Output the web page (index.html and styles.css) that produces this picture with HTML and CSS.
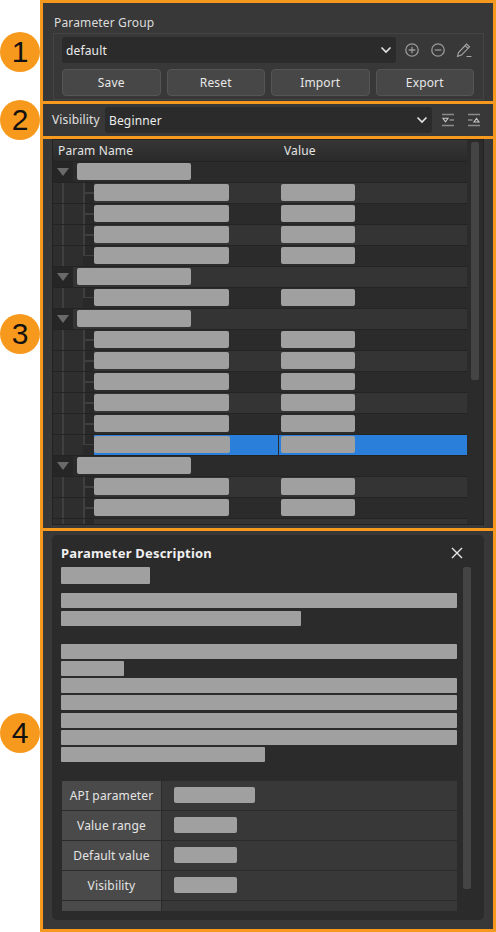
FILE: index.html
```html
<!DOCTYPE html>
<html lang="en">
<head>
<meta charset="utf-8">
<title>Parameter panel</title>
<link rel="stylesheet" href="styles.css">
</head>
<body>
<main class="frame">
  <section class="sec sec-group">
    <div class="badge">1</div>
    <div class="group-label">Parameter Group</div>
    <div class="group-box">
      <div class="combo-row">
        <div class="combo combo-group"><span>default</span>
          <svg class="chev" width="12" height="8" viewBox="0 0 12 8"><path d="M1.5 1.5 6 6l4.500-4.500" fill="none" stroke="#e4e4e4" stroke-width="1.600"/></svg>
        </div>
        <svg class="ico first" width="16" height="16" viewBox="0 0 16 16"><g fill="none" stroke="#9a9a9a" stroke-width="1.300"><circle cx="8" cy="8" r="6.200"/><path d="M4.700 8h6.600M8 4.700v6.600"/></g></svg>
        <svg class="ico" width="16" height="16" viewBox="0 0 16 16"><g fill="none" stroke="#9a9a9a" stroke-width="1.300"><circle cx="8" cy="8" r="6.200"/><path d="M4.700 8h6.600"/></g></svg>
        <svg class="ico" width="16" height="16" viewBox="0 0 16 16"><g fill="none" stroke="#a8a8a8" stroke-width="1.100"><path d="M1.500 14.500 2.500 10.500 10.500 2l3 2.800-8 8.300z"/><path d="M9 3.600l3 2.800M10.500 14.500h5"/></g></svg>
      </div>
      <div class="btn-row">
        <button class="btn">Save</button>
        <button class="btn">Reset</button>
        <button class="btn">Import</button>
        <button class="btn">Export</button>
      </div>
    </div>
  </section>

  <section class="sec sec-vis">
    <div class="badge">2</div>
    <span class="vis-label">Visibility</span>
    <div class="combo combo-vis"><span>Beginner</span>
      <svg class="chev" width="12" height="8" viewBox="0 0 12 8"><path d="M1.500 1.500 6 6l4.500-4.500" fill="none" stroke="#e4e4e4" stroke-width="1.600"/></svg>
    </div>
    <svg class="ico first-vis" width="14" height="14" viewBox="0 0 14 14"><g fill="none" stroke="#8a8a8a" stroke-width="1.600"><path d="M1 1.500h12M8.500 7H13M1 12.500h12"/></g><path d="M2 5.300h5L4.500 8.800z" fill="none" stroke="#c8c8c8" stroke-width="1.100"/></svg>
    <svg class="ico" width="14" height="14" viewBox="0 0 14 14"><g fill="none" stroke="#8a8a8a" stroke-width="1.600"><path d="M1 1.500h12M1 7h4.500M1 12.500h12"/></g><path d="M7 9h5L9.500 5.500z" fill="none" stroke="#c8c8c8" stroke-width="1.100"/></svg>
  </section>

  <section class="sec sec-table">
    <div class="badge">3</div>
    <div class="table">
      <div class="table-main">
        <div class="thead"><div class="th-name">Param Name</div><div class="th-val">Value</div></div>
        <div class="row dark group"><div class="c-name"><span class="arrow"></span><span class="m m-group"></span></div><div class="c-val"></div></div>
        <div class="row light"><div class="c-name"><span class="guide"></span><span class="m m-name"></span></div><div class="c-val"><span class="m m-val"></span></div></div>
        <div class="row dark"><div class="c-name"><span class="guide"></span><span class="m m-name"></span></div><div class="c-val"><span class="m m-val"></span></div></div>
        <div class="row light"><div class="c-name"><span class="guide"></span><span class="m m-name"></span></div><div class="c-val"><span class="m m-val"></span></div></div>
        <div class="row dark"><div class="c-name"><span class="guide last"></span><span class="m m-name"></span></div><div class="c-val"><span class="m m-val"></span></div></div>
        <div class="row light group"><div class="c-name"><span class="arrow"></span><span class="m m-group"></span></div><div class="c-val"></div></div>
        <div class="row dark"><div class="c-name"><span class="guide last"></span><span class="m m-name"></span></div><div class="c-val"><span class="m m-val"></span></div></div>
        <div class="row light group"><div class="c-name"><span class="arrow"></span><span class="m m-group"></span></div><div class="c-val"></div></div>
        <div class="row dark"><div class="c-name"><span class="guide"></span><span class="m m-name"></span></div><div class="c-val"><span class="m m-val"></span></div></div>
        <div class="row light"><div class="c-name"><span class="guide"></span><span class="m m-name"></span></div><div class="c-val"><span class="m m-val"></span></div></div>
        <div class="row dark"><div class="c-name"><span class="guide"></span><span class="m m-name"></span></div><div class="c-val"><span class="m m-val"></span></div></div>
        <div class="row light"><div class="c-name"><span class="guide"></span><span class="m m-name"></span></div><div class="c-val"><span class="m m-val"></span></div></div>
        <div class="row dark"><div class="c-name"><span class="guide"></span><span class="m m-name"></span></div><div class="c-val"><span class="m m-val"></span></div></div>
        <div class="row selected"><div class="c-name"><span class="guide last"></span><span class="sel-fill"><span class="m m-name"></span></span></div><div class="c-val"><span class="m m-val"></span></div></div>
        <div class="row dark group"><div class="c-name"><span class="arrow"></span><span class="m m-group"></span></div><div class="c-val"></div></div>
        <div class="row light"><div class="c-name"><span class="guide"></span><span class="m m-name"></span></div><div class="c-val"><span class="m m-val"></span></div></div>
        <div class="row dark"><div class="c-name"><span class="guide"></span><span class="m m-name"></span></div><div class="c-val"><span class="m m-val"></span></div></div>
        <div class="row light"><div class="c-name"><span class="guide"></span></div><div class="c-val"></div></div>
      </div>
      <div class="table-scroll"><div class="thumb thumb-table"></div></div>
    </div>
  </section>

  <section class="sec sec-desc">
    <div class="badge badge-desc">4</div>
    <div class="card">
      <header class="card-head">
        <h2>Parameter Description</h2>
        <svg class="close" width="12" height="12" viewBox="0 0 12 12"><path d="M1 1l10 10M11 1 1 11" stroke="#e8e8e8" stroke-width="1.400" fill="none"/></svg>
      </header>
      <div class="card-body">
        <div class="desc">
          <div class="b b-title"></div>
          <div class="para para-a">
            <div class="b"></div>
            <div class="b b-240"></div>
          </div>
          <div class="para para-b">
            <div class="b"></div>
            <div class="b b-63"></div>
            <div class="b"></div>
            <div class="b"></div>
            <div class="b"></div>
            <div class="b"></div>
            <div class="b b-204"></div>
          </div>
          <div class="info">
            <div class="info-row"><div class="info-k">API parameter</div><div class="info-v"><span class="v v-81"></span></div></div>
            <div class="info-row"><div class="info-k">Value range</div><div class="info-v"><span class="v v-63"></span></div></div>
            <div class="info-row"><div class="info-k">Default value</div><div class="info-v"><span class="v v-63"></span></div></div>
            <div class="info-row"><div class="info-k">Visibility</div><div class="info-v"><span class="v v-63"></span></div></div>
            <div class="info-row"><div class="info-k"></div><div class="info-v"></div></div>
          </div>
        </div>
        <div class="desc-scroll"><div class="thumb thumb-desc"></div></div>
      </div>
    </div>
  </section>
</main>
</body>
</html>
```

FILE: styles.css
```css
* { box-sizing: border-box; }
html, body { margin: 0; padding: 0; background: #fff; }
body { width: 496px; height: 932px; overflow: hidden; font-family: "Noto Sans", "Open Sans", sans-serif; font-size: 12px; letter-spacing: 0.15px; color: #e6e6e6; }

.frame { margin-left: 40px; width: 456px; height: 932px; border: 3px solid #f7991d; background: #383838; display: flex; flex-direction: column; }
.sec { position: relative; flex: none; }
.sec + .sec { border-top: 3px solid #f7991d; }

.badge { position: absolute; left: -43px; top: 50%; width: 40px; height: 40px; margin-top: -20px; border-radius: 50%; background: #f7991d; color: #111; font-family: "Liberation Sans", sans-serif; font-size: 30px; letter-spacing: 0; line-height: 40px; text-align: center; z-index: 2; }
.sec-desc .badge-desc { top: 182px; margin-top: 0; }

/* section 1 */
.sec-group { height: 98px; padding: 13px 9px 0 10px; }
.group-label { height: 14px; line-height: 14px; margin: 0 0 3px 1px; color: #dcdcdc; }
.group-box { height: 67px; border: 1px solid #444; padding: 3px 9px 0 8px; }
.combo-row { display: flex; align-items: center; height: 26px; }
.combo { display: flex; align-items: center; justify-content: space-between; height: 26px; background: #2b2b2b; border-radius: 3px; color: #ececec; }
.combo-group { width: 334px; padding: 0 4px; }
.ico { flex: none; display: block; }
.first { margin-left: 8px; }
.combo-row .ico + .ico { margin-left: 10px; }
.btn-row { display: flex; gap: 6px; margin-top: 6px; }
.btn { flex: 1; height: 27px; padding: 0; background: #474747; border: 1px solid #555; border-radius: 4px; color: #e8e8e8; font: inherit; letter-spacing: inherit; }

/* section 2 */
.sec-vis { height: 35px; padding: 3px 9px 0 9px; display: flex; align-items: flex-start; }
.vis-label { width: 53px; height: 26px; line-height: 25px; color: #e0e0e0; }
.combo-vis { width: 327px; padding: 0 4px; }
.first-vis { margin: 6px 0 0 9px; }
.first-vis + .ico { margin: 6px 0 0 12px; }

/* section 3 */
.sec-table { height: 392px; padding: 0 9px 3px 9px; }
.table { height: 386px; border: 1px solid #222; background: #2b2b2b; display: flex; overflow: hidden; }
.table-main { width: 414px; flex: none; display: flex; flex-direction: column; gap: 1px; background: #232323; }
.thead { flex: none; display: flex; height: 21px; background: linear-gradient(#363636, #2a2a2a); line-height: 21px; color: #e4e4e4; }
.th-name { width: 225px; padding-left: 5px; }
.th-val { padding-left: 6px; }
.row { flex: none; display: flex; height: 20px; gap: 1px; }
.row.dark { background: #2b2b2b; }
.row.light { background: #343434; }
.row.selected { background: #2b2b2b; }
.c-name { width: 225px; flex: none; display: flex; height: 20px; }
.c-val { flex: 1; display: flex; padding-left: 2px; height: 20px; }
.selected .c-val { background: #2a7fdb; }
.guide { flex: none; align-self: stretch; width: 41px;
  background:
    linear-gradient(#3f3f3f, #3f3f3f) 9px 0 / 2px 100% no-repeat,
    linear-gradient(#3f3f3f, #3f3f3f) 30px 0 / 2px 100% no-repeat,
    linear-gradient(#3f3f3f, #3f3f3f) 30px 9px / 11px 2px no-repeat,
    linear-gradient(#292929, #292929) 30px 0 / 11px 100% no-repeat,
    #2e2e2e; }
.guide.last {
  background:
    linear-gradient(#3f3f3f, #3f3f3f) 9px 0 / 2px 100% no-repeat,
    linear-gradient(#3f3f3f, #3f3f3f) 30px 0 / 2px 10px no-repeat,
    linear-gradient(#3f3f3f, #3f3f3f) 30px 9px / 11px 1px no-repeat,
    linear-gradient(#292929, #292929) 30px 0 / 11px 100% no-repeat,
    #2e2e2e; }
.arrow { flex: none; align-self: stretch; width: 20px; margin-right: 4px; background: #262626; display: flex; align-items: center; justify-content: center; }
.arrow::before { content: ""; border-left: 6px solid transparent; border-right: 6px solid transparent; border-top: 8px solid #6a6a6a; }
.m { display: block; background: #a0a0a0; border-radius: 2px; height: 17px; margin-top: 1px; }
.m-group { width: 114px; }
.m-name { width: 135px; }
.m-val { width: 74px; }
.sel-fill { flex: 1; height: 20px; background: #2a7fdb; display: flex; }
.sel-fill .m { width: 136px; }
.table-scroll { flex: 1; padding: 2px 5px 0 4px; }
.thumb { background: #444; border-radius: 2px; width: 8px; }
.thumb-table { height: 238px; }

/* section 4 */
.sec-desc { flex: 1; min-height: 0; padding: 4px 9px 9px 9px; }
.card { height: 385px; background: #2b2b2b; border-radius: 5px; padding: 10px 13px 9px 9px; display: flex; flex-direction: column; overflow: hidden; }
.card-head { flex: none; height: 16px; display: flex; align-items: center; justify-content: space-between; padding-right: 8px; }
.card-head h2 { margin: 0; font-size: 13px; font-weight: 700; letter-spacing: 0.2px; color: #f0f0f0; line-height: 16px; }
.close { display: block; }
.card-body { flex: 1; min-height: 0; display: flex; margin-top: 6px; }
.desc { width: 396px; flex: none; overflow: hidden; }
.b { height: 15px; background: #a0a0a0; border-radius: 1px; }
.b-title { width: 89px; height: 17px; }
.para { display: flex; flex-direction: column; gap: 2.170px; }
.para-a { margin-top: 9px; gap: 3px; }
.para-b { margin-top: 18px; }
.b-240 { width: 240px; }
.b-63 { width: 63px; }
.b-204 { width: 204px; }
.info { margin: 19px 0 0 1px; display: flex; flex-direction: column; gap: 1px; }
.info-row { display: flex; height: 29px; gap: 1px; }
.info-k { width: 99px; flex: none; background: #4a4a4a; text-align: center; line-height: 29px; color: #e4e4e4; }
.info-v { flex: 1; background: #383838; display: flex; align-items: center; padding-left: 12px; }
.v { display: block; height: 16px; background: #a0a0a0; border-radius: 2px; }
.v-81 { width: 81px; }
.v-63 { width: 63px; }
.desc-scroll { padding-left: 6px; }
.thumb-desc { height: 322px; }
```
